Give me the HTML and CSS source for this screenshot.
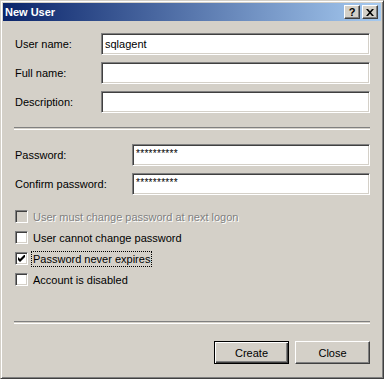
FILE: index.html
```html
<!DOCTYPE html>
<html lang="en">
<head>
    <meta charset="UTF-8">
    <title>New User</title>
    <link rel="stylesheet" href="styles.css">
</head>
<body>
    <div class="window">
        <div class="titlebar">
            <span class="title">New User</span>
            <div class="caption-buttons">
                <button class="cap-btn help">?</button>
                <button class="cap-btn close">
                    <svg width="8" height="7" viewBox="0 0 8 7"><path d="M0 0h2l2 2.2L6 0h2L5 3.5 8 7H6L4 4.8 2 7H0l3-3.5z" fill="#000"/></svg>
                </button>
            </div>
        </div>

        <div class="content">
            <div class="fields fields-top">
                <label>User name:</label>
                <div class="edit">sqlagent</div>
                <label>Full name:</label>
                <div class="edit"></div>
                <label>Description:</label>
                <div class="edit"></div>
            </div>

            <div class="separator"></div>

            <div class="fields fields-pass">
                <label>Password:</label>
                <div class="edit secret">**********</div>
                <label>Confirm password:</label>
                <div class="edit secret">**********</div>
            </div>

            <div class="checks">
                <div class="check disabled"><span class="box"></span><span class="text">User must change password at next logon</span></div>
                <div class="check"><span class="box"></span><span class="text">User cannot change password</span></div>
                <div class="check"><span class="box"><svg width="7" height="7" viewBox="0 0 7 7"><path d="M0 2v3l2 2 5-5V-1L2 4z" fill="#000"/></svg></span><span class="text focused">Password never expires</span></div>
                <div class="check"><span class="box"></span><span class="text">Account is disabled</span></div>
            </div>

            <div class="separator bottom-sep"></div>

            <div class="buttons">
                <button class="btn default">Create</button>
                <button class="btn">Close</button>
            </div>
        </div>
    </div>
</body>
</html>
```

FILE: styles.css
```css
body {
    margin: 0;
    font-family: Tahoma, "Liberation Sans", Arial, sans-serif;
    font-size: 11px;
    color: #000;
}
.window {
    box-sizing: border-box;
    width: 384px;
    height: 379px;
    background-color: #d4d0c8;
    border: 1px solid;
    border-color: #d4d0c8 #404040 #404040 #d4d0c8;
    box-shadow: inset 1px 1px #fff, inset -1px -1px #808080;
    padding: 2px;
    display: flex;
    flex-direction: column;
}
.titlebar {
    height: 18px;
    background: linear-gradient(to right, #0a246a, #a6caf0);
    display: flex;
    align-items: center;
    justify-content: space-between;
    padding: 0 3px 0 2px;
}
.title {
    color: #fff;
    font-weight: bold;
    font-size: 11px;
}
.caption-buttons {
    display: flex;
    gap: 2px;
}
.cap-btn {
    box-sizing: border-box;
    width: 16px;
    height: 14px;
    padding: 0;
    margin: 0;
    background-color: #d4d0c8;
    border: 1px solid;
    border-color: #fff #404040 #404040 #fff;
    box-shadow: inset -1px -1px #808080;
    display: flex;
    align-items: center;
    justify-content: center;
    font-family: inherit;
    font-weight: bold;
    font-size: 11px;
    line-height: 12px;
}
.content {
    padding: 12px 11px 0 11px;
    display: flex;
    flex-direction: column;
}
.fields {
    display: grid;
    grid-auto-rows: 22px;
    row-gap: 7px;
    align-items: center;
}
.fields-top {
    grid-template-columns: 87px 1fr;
}
.fields-pass {
    grid-template-columns: 118px 1fr;
    margin-top: 14px;
}
.fields label {
    padding-left: 1px;
}
.edit {
    box-sizing: border-box;
    height: 22px;
    background-color: #fff;
    border: 1px solid;
    border-color: #808080 #fff #fff #808080;
    box-shadow: inset 1px 1px #404040, inset -1px -1px #d4d0c8;
    padding: 2px 3px;
    line-height: 16px;
}
.edit.secret {
    font-size: 10px;
    line-height: 14px;
    padding-top: 2px;
    letter-spacing: 0.3px;
}
.separator {
    height: 1px;
    border-top: 1px solid #808080;
    border-bottom: 1px solid #fff;
    margin-top: 14px;
}
.checks {
    display: flex;
    flex-direction: column;
    gap: 8px;
    margin-top: 15px;
    padding-left: 1px;
}
.check {
    display: flex;
    align-items: center;
    height: 13px;
    gap: 4px;
}
.box {
    box-sizing: border-box;
    width: 13px;
    height: 13px;
    flex: none;
    background-color: #fff;
    border: 1px solid;
    border-color: #808080 #fff #fff #808080;
    box-shadow: inset 1px 1px #404040, inset -1px -1px #d4d0c8;
    display: flex;
    align-items: center;
    justify-content: center;
}
.check .text {
    padding: 0 1px;
    line-height: 14px;
}
.check.disabled .box {
    background-color: #d4d0c8;
}
.check.disabled .text {
    color: #808080;
    text-shadow: 1px 1px 0 #fff;
}
.text.focused {
    outline: 1px dotted #000;
}
.bottom-sep {
    margin-top: 35px;
}
.buttons {
    display: flex;
    justify-content: flex-end;
    gap: 6px;
    margin-top: 17px;
}
.btn {
    box-sizing: border-box;
    width: 75px;
    height: 23px;
    margin: 0;
    padding: 0;
    background-color: #d4d0c8;
    font-family: inherit;
    font-size: 11px;
    color: #000;
    border: 1px solid;
    border-color: #fff #404040 #404040 #fff;
    box-shadow: inset -1px -1px #808080;
}
.btn.default {
    border-color: #000;
    box-shadow: inset 1px 1px #fff, inset -1px -1px #404040, inset -2px -2px #808080;
}
```
